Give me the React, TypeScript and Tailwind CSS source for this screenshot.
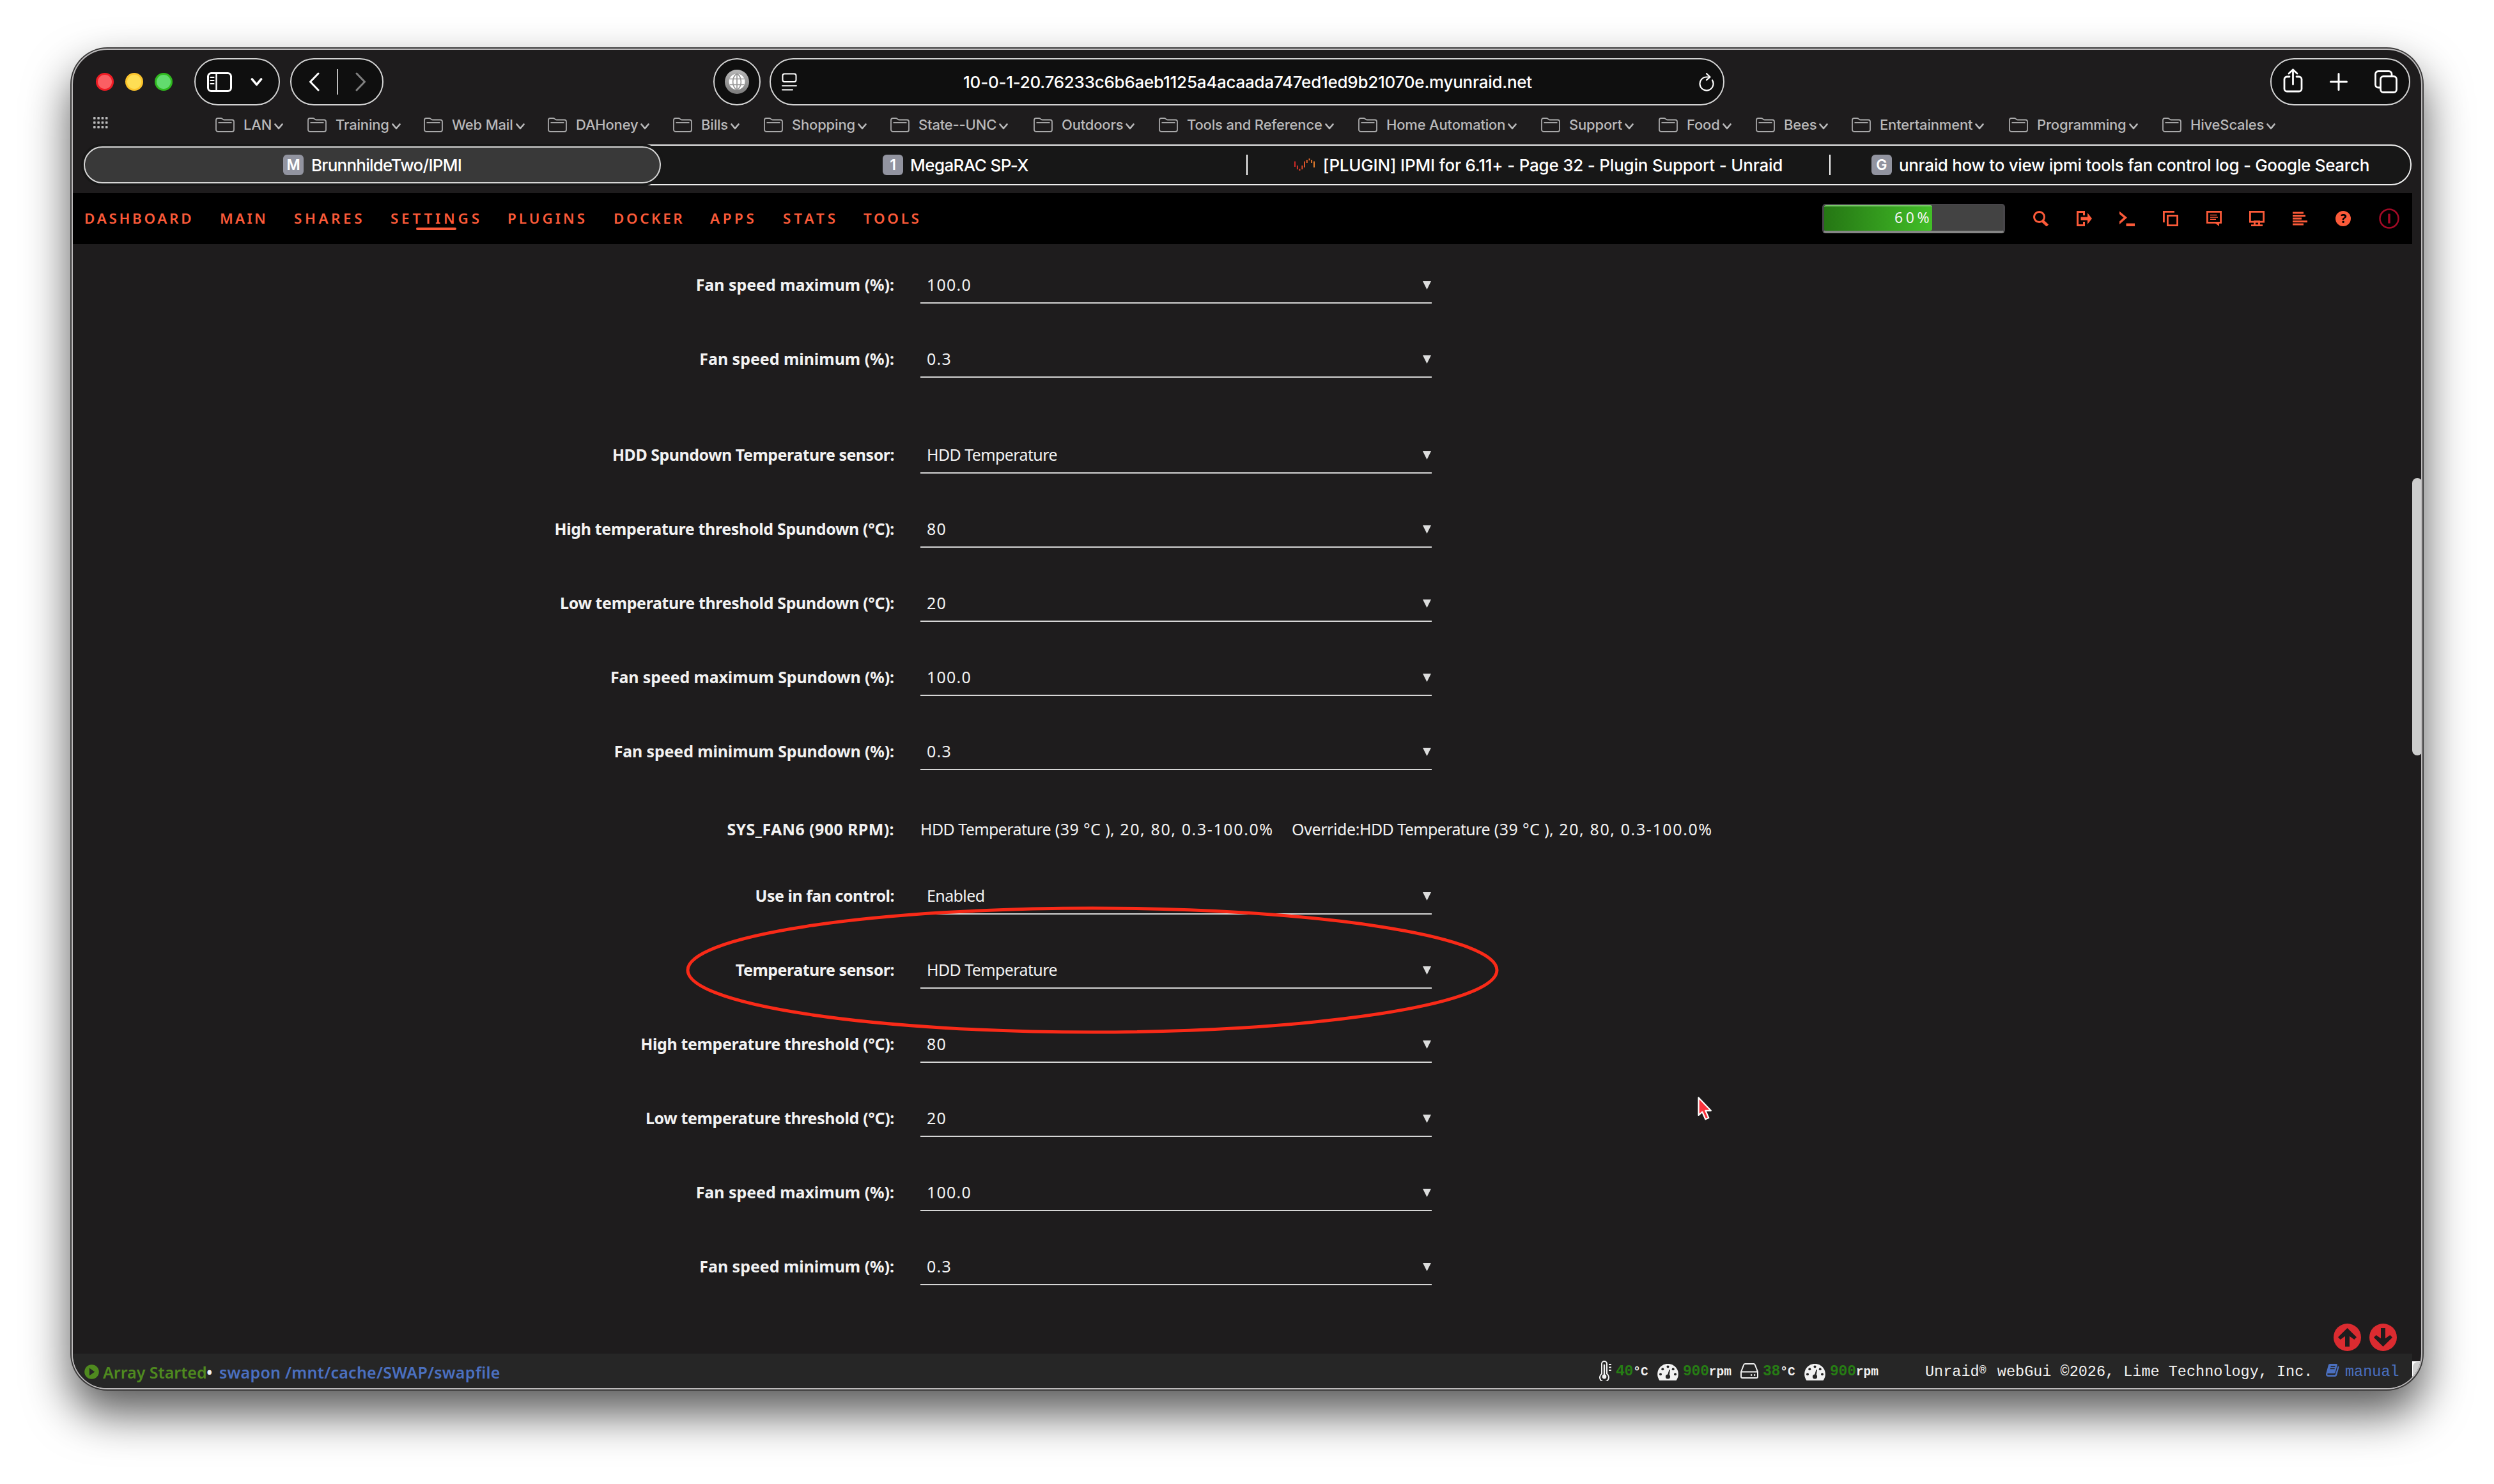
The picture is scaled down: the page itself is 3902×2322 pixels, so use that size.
import type { ReactNode } from 'react';

interface Bookmark {
  label: string;
  width: string;
}

interface FieldProps {
  label: string;
  value: string;
  spacing?: string;
  labelClass?: string;
}

const bookmarks: Bookmark[] = [
  { label: 'LAN', width: 'w-[144px]' },
  { label: 'Training', width: 'w-[182px]' },
  { label: 'Web Mail', width: 'w-[194px]' },
  { label: 'DAHoney', width: 'w-[196px]' },
  { label: 'Bills', width: 'w-[142px]' },
  { label: 'Shopping', width: 'w-[198px]' },
  { label: 'State--UNC', width: 'w-[224px]' },
  { label: 'Outdoors', width: 'w-[196px]' },
  { label: 'Tools and Reference', width: 'w-[312px]' },
  { label: 'Home Automation', width: 'w-[286px]' },
  { label: 'Support', width: 'w-[184px]' },
  { label: 'Food', width: 'w-[152px]' },
  { label: 'Bees', width: 'w-[150px]' },
  { label: 'Entertainment', width: 'w-[246px]' },
  { label: 'Programming', width: 'w-[240px]' },
  { label: 'HiveScales', width: 'w-[180px]' },
];

const navItems = [
  { label: 'Dashboard', className: 'w-[212px] tracking-[3.7px]' },
  { label: 'Main', className: 'w-[116px] tracking-[3.3px]' },
  { label: 'Shares', className: 'w-[151px] tracking-[4.6px]' },
  { label: 'Settings', className: 'w-[183px] tracking-[4.8px]', active: true },
  { label: 'Plugins', className: 'w-[166px] tracking-[4px]' },
  { label: 'Docker', className: 'w-[151px] tracking-[3.6px]' },
  { label: 'Apps', className: 'w-[114px] tracking-[4.6px]' },
  { label: 'Stats', className: 'w-[126px] tracking-[5px]' },
  { label: 'Tools', className: 'w-[126px] tracking-[3.7px]' },
];

function FolderIcon() {
  return (
    <svg className="h-[23px] w-[30px] shrink-0" viewBox="0 0 30 23" fill="none" stroke="#a9a9aa" strokeWidth="1.8">
      <path d="M1 19V4a3 3 0 0 1 3-3h4.5c1 0 1.6.3 2.3.9l1 .8c.6.5 1.2.8 2.2.8H26a3 3 0 0 1 3 3V19a3 3 0 0 1-3 3H4a3 3 0 0 1-3-3Z" />
      <path d="M4.5 7.8h21" />
    </svg>
  );
}

function Chevron({ className }: { className: string }) {
  return (
    <svg className={className} viewBox="0 0 14 10" fill="none" stroke="currentColor" strokeWidth="2.7" strokeLinecap="round" strokeLinejoin="round">
      <path d="M1.5 1.5 7 8l5.5-6.5" />
    </svg>
  );
}

function Pill({ className, children }: { className: string; children: ReactNode }) {
  return (
    <div className={`flex h-[74px] shrink-0 items-center rounded-full border-2 border-[#d2d2d2] bg-[#0f0f0f] text-white ${className}`}>
      {children}
    </div>
  );
}

function Toolbar() {
  return (
    <div className="flex h-[87px] items-end pr-[17px] pl-[36px]">
      <div className="flex h-[74px] items-center gap-[18px]">
        <span className="size-7 rounded-full border-3 border-[#ef1c24] bg-[#fb5f63]" />
        <span className="size-7 rounded-full border-3 border-[#fcc42c] bg-[#fede54]" />
        <span className="size-7 rounded-full border-3 border-[#30b91f] bg-[#62db6e]" />
      </div>

      <Pill className="ml-[34px] w-[134px] pl-[18px]">
        <svg className="h-[31px] w-[39px]" viewBox="0 0 39 31" fill="none" stroke="currentColor">
          <rect x="1.5" y="1.5" width="36" height="28" rx="5" strokeWidth="3" />
          <path d="M14.5 2v27" strokeWidth="2.4" />
          <path d="M5.5 8h5M5.5 13h5M5.5 18h5" strokeWidth="2.2" strokeLinecap="round" />
        </svg>
        <Chevron className="ml-[29px] h-[13px] w-[19px]" />
      </Pill>

      <Pill className="ml-4 w-[146px] pl-[27px]">
        <svg className="h-[30px] w-[17px]" viewBox="0 0 17 30" fill="none" stroke="currentColor" strokeWidth="3" strokeLinecap="round" strokeLinejoin="round">
          <path d="M15 2 2.5 15 15 28" />
        </svg>
        <span className="ml-[27px] h-10 w-0.5 bg-[#bdbdbd]" />
        <svg className="ml-[27px] h-[30px] w-[17px]" viewBox="0 0 17 30" fill="none" stroke="#808080" strokeWidth="3" strokeLinecap="round" strokeLinejoin="round">
          <path d="m2 2 12.5 13L2 28" />
        </svg>
      </Pill>

      <Pill className="ml-[516px] w-[74px] justify-center">
        <span className="flex size-[38px] items-center justify-center rounded-full bg-linear-to-b from-[#b8b8b8] to-[#7c7c7c]">
          <svg className="size-[26px]" viewBox="0 0 26 26">
            <circle cx="13" cy="13" r="12.5" fill="#fff" />
            <path d="M13 0v26M1.5 8.5h23M1.5 17.5h23M13 0C4.5 6 4.5 20 13 26M13 0c8.5 6 8.5 20 0 26" fill="none" stroke="#979797" strokeWidth="1.7" />
          </svg>
        </span>
      </Pill>

      <Pill className="ml-[14px] w-[1494px] justify-between pr-[14px] pl-[17px]">
        <svg className="h-[28px] w-[24px]" viewBox="0 0 24 28" fill="none" stroke="currentColor" strokeWidth="2">
          <rect x="1.5" y="1.5" width="21" height="12.5" rx="3" />
          <path d="M1 20.2h22M1 26.5h16" strokeLinecap="round" />
        </svg>
        <span className="text-[26px] font-medium tracking-[-0.25px]">
          10-0-1-20.76233c6b6aeb1125a4acaada747ed1ed9b21070e.myunraid.net
        </span>
        <svg className="h-[29px] w-[25px]" viewBox="0 0 25 29" fill="none" stroke="currentColor" strokeWidth="2.2" strokeLinecap="round" strokeLinejoin="round">
          <path d="M22 11.5A10.5 10.5 0 1 1 12.5 6.5h5.5" />
          <path d="m13 1.2 5.5 5.3-5.5 4.7" />
        </svg>
      </Pill>

      <Pill className="ml-auto w-[219px] justify-between px-[18px]">
        <svg className="mb-1 h-[38px] w-[31px]" viewBox="0 0 31 38" fill="none" stroke="currentColor" strokeWidth="2.8" strokeLinecap="round" strokeLinejoin="round">
          <path d="M10 13H6a4 4 0 0 0-4 4v15a4 4 0 0 0 4 4h19a4 4 0 0 0 4-4V17a4 4 0 0 0-4-4h-4" />
          <path d="M15.5 25V2M9 8l6.5-6L22 8" />
        </svg>
        <svg className="size-[28px]" viewBox="0 0 28 28" fill="none" stroke="currentColor" strokeWidth="3" strokeLinecap="round">
          <path d="M14 1.5v25M1.5 14h25" />
        </svg>
        <svg className="size-[36px]" viewBox="0 0 36 36" fill="none" stroke="currentColor" strokeWidth="2.8">
          <rect x="9.5" y="9.5" width="25" height="25" rx="4.5" />
          <path d="M9.5 27H6a4.5 4.5 0 0 1-4.5-4.5V6A4.5 4.5 0 0 1 6 1.5h16.5A4.5 4.5 0 0 1 27 6v3.5" />
        </svg>
      </Pill>
    </div>
  );
}

function BookmarksBar() {
  return (
    <div className="flex h-[61px] items-center pl-8 text-[#b9b9ba]">
      <svg className="mb-2 h-[18px] w-[23px]" viewBox="0 0 23 18" fill="currentColor">
        {[0, 7, 14].map((y) =>
          [0, 6.3, 12.6, 18.9].map((x) => <rect key={`${x}-${y}`} x={x} y={y} width="3.6" height="3.8" rx="0.8" />)
        )}
      </svg>
      <div className="ml-[168px] flex">
        {bookmarks.map(({ label, width }) => (
          <div key={label} className={`flex shrink-0 items-center ${width}`}>
            <FolderIcon />
            <span className="ml-[14px] text-[22px] font-medium tracking-[-0.18px] whitespace-nowrap">{label}</span>
            <Chevron className="mt-1 ml-[4px] h-[10px] w-[14px]" />
          </div>
        ))}
      </div>
    </div>
  );
}

function Favicon({ letter }: { letter: string }) {
  return (
    <span className="flex size-8 shrink-0 items-center justify-center rounded-md bg-[#9294a0] text-[23px] leading-none font-semibold text-white">
      {letter}
    </span>
  );
}

function UnraidMark() {
  return (
    <svg className="h-5 w-8 shrink-0" viewBox="0 0 32 20" fill="none" strokeWidth="1.8">
      <defs>
        <linearGradient id="unraid-mark" gradientUnits="userSpaceOnUse" x1="0" y1="0" x2="32" y2="0">
          <stop offset="0" stopColor="#e22828" />
          <stop offset="1" stopColor="#ff8c2f" />
        </linearGradient>
      </defs>
      <path
        d="M1 4.5v8.5M4.8 11v6M8.5 16v3M12.3 11v6M16 4.5v9.5M19.8 2v5M23.5 0v3M27.2 2v5M31 4.5v9.5"
        stroke="url(#unraid-mark)"
      />
    </svg>
  );
}

function TabBar() {
  return (
    <div className="mr-[15px] ml-4 flex h-16 items-center rounded-full border-2 border-[#eeeeee] bg-[#171717] text-[26px] font-medium text-white">
      <div className="-ml-px flex h-[58px] w-[903px] items-center justify-center gap-3 rounded-full border-2 border-[#d6d6d6] bg-[#393939] shadow-[0_0_0_4px_#171717]">
        <Favicon letter="M" />
        <span className="tracking-[-0.75px]">BrunnhildeTwo/IPMI</span>
      </div>
      <div className="ml-[6px] flex w-[910px] items-center justify-center gap-[11px]">
        <Favicon letter="1" />
        <span className="tracking-[-0.6px]">MegaRAC SP-X</span>
      </div>
      <span className="h-8 w-0.5 bg-white" />
      <div className="flex w-[910px] items-center justify-center gap-[13px]">
        <UnraidMark />
        <span className="tracking-[-0.22px]">[PLUGIN] IPMI for 6.11+ - Page 32 - Plugin Support - Unraid</span>
      </div>
      <span className="h-8 w-0.5 bg-white" />
      <div className="flex flex-1 items-center justify-center gap-[11px]">
        <Favicon letter="G" />
        <span className="tracking-[-0.32px]">unraid how to view ipmi tools fan control log - Google Search</span>
      </div>
    </div>
  );
}

function NavIcons() {
  return (
    <div className="ml-11 flex items-center gap-[43.6px] text-[#fb5a39]">
      <svg className="size-6" viewBox="0 0 24 24" fill="none" stroke="currentColor">
        <circle cx="9.5" cy="9.5" r="8" strokeWidth="3" />
        <path d="m14.5 15.5 8 7.5" strokeWidth="4.5" />
      </svg>
      <svg className="size-6" viewBox="0 0 24 24" fill="currentColor">
        <path d="M0 0h13v7h-3V3H3v18h7v-4h3v7H0z" />
        <path d="M6.5 9.5H17V3l7 9-7 9v-6.5H6.5z" />
      </svg>
      <svg className="size-6" viewBox="0 0 24 24" fill="currentColor">
        <path d="M0 .5 12 10.500 0 21v-4.500l6.500-6L0 5zM10.500 19.500H24V24H10.500z" />
      </svg>
      <svg className="size-6" viewBox="0 0 24 24" fill="none" stroke="currentColor" strokeWidth="2.8">
        <path d="M1.4 18V1.4H18" />
        <path d="M7.4 7.4h15.2v15.2H7.4z" />
      </svg>
      <svg className="size-6" viewBox="0 0 24 24" fill="none" stroke="currentColor">
        <path d="M1.4 1.4h21.2v17H1.4z" strokeWidth="2.8" />
        <path d="M6 6.5h10.5M6 10h12M6 13.3h9" strokeWidth="1.6" />
        <path d="M13.5 19h6.5v5z" fill="currentColor" stroke="none" />
      </svg>
      <svg className="size-6" viewBox="0 0 24 24" fill="none" stroke="currentColor">
        <path d="M1.4 1.4h21.2v15.8H1.4z" strokeWidth="2.8" />
        <path d="M7 16.5h10M3 22.7h18M8.5 17v7M15.5 17v7" strokeWidth="2.8" />
      </svg>
      <svg className="size-6" viewBox="0 0 24 24" fill="currentColor">
        <path d="M0 1.5h17v3H0zM0 6h20v3H0zM0 10.500h14v3H0zM0 15h23v3H0zM0 19.500h17v3H0z" />
      </svg>
      <span className="flex size-6 items-center justify-center rounded-full bg-[#fb5a39] text-[20px] leading-none font-bold text-black">?</span>
      <svg className="size-8" viewBox="0 0 32 32" fill="none" stroke="#a30a26">
        <circle cx="16" cy="16" r="14.5" strokeWidth="2.5" />
        <path d="M16 8.5v15" strokeWidth="3.5" />
      </svg>
    </div>
  );
}

function Header() {
  return (
    <header className="flex h-20 shrink-0 items-center bg-black pr-5 pl-[18px]">
      <nav className="flex text-[22.4px] leading-[30px] font-semibold text-[#fb5a39] uppercase">
        {navItems.map(({ label, className, active }) => (
          <div key={label} className={`relative ${className}`}>
            {label}
            {active && <span className="absolute top-[29px] left-10 h-1 w-[63px] rounded-sm bg-[#fb5a39]" />}
          </div>
        ))}
      </nav>
      <div className="ml-auto flex h-[46px] w-[286px] rounded-[5px] border-3 border-t-2 border-b-4 border-[#48464a] border-b-[#858585] bg-[#434343]">
        <div className="flex w-[169px] items-center justify-end rounded-[3px] border-t-2 border-[#79c86a] bg-linear-to-r from-[#257614] to-[#42bf27] pb-1 text-[23px] tracking-[4.6px] text-[#f4f4f4]">
          60%
        </div>
      </div>
      <NavIcons />
    </header>
  );
}

function Field({ label, value, spacing = 'mt-14', labelClass = 'tracking-[-0.5px]' }: FieldProps) {
  const isText = /[a-z]/i.test(value);
  return (
    <div className={`flex h-[60px] ${spacing}`}>
      <label className={`flex w-[1285px] items-end justify-end pb-[13px] font-bold ${labelClass}`}>{label}</label>
      <div className="ml-[41px] flex w-[800px] items-end justify-between border-b-2 border-[#d6d6d6] pr-px pb-[11px] pl-[10px]">
        <span className={isText ? 'tracking-[-0.6px]' : 'tracking-[1.2px]'}>{value}</span>
        <svg className="mb-[9px] h-[13px] w-[13px]" viewBox="0 0 13 13" fill="#dcdcdc">
          <path d="M0 0h13L6.5 13z" />
        </svg>
      </div>
    </div>
  );
}

function Reading() {
  return (
    <>
      <span className="tracking-[-0.6px]">HDD Temperature</span>
      <span className="tracking-[0.4px]"> (39 °C ),</span>
      <span className="tracking-[1.6px]"> 20, 80, 0.3-100.0%</span>
    </>
  );
}

function Settings() {
  return (
    <main className="flex-1 overflow-hidden bg-[#1e1c1d] text-[25px] leading-[34px] text-[#f2f2f2]">
      <Field label="Fan speed maximum (%):" value="100.0" spacing="mt-[33px]" labelClass="tracking-[-0.04px]" />
      <Field label="Fan speed minimum (%):" value="0.3" labelClass="tracking-[-0.04px]" />
      <Field label="HDD Spundown Temperature sensor:" value="HDD Temperature" spacing="mt-[90px]" />
      <Field label="High temperature threshold Spundown (°C):" value="80" labelClass="tracking-[-0.34px]" />
      <Field label="Low temperature threshold Spundown (°C):" value="20" labelClass="tracking-[-0.36px]" />
      <Field label="Fan speed maximum Spundown (%):" value="100.0" labelClass="tracking-[-0.14px]" />
      <Field label="Fan speed minimum Spundown (%):" value="0.3" labelClass="tracking-[-0.14px]" />

      <div className="mt-[62px] flex h-[60px] items-end pb-[13px]">
        <span className="w-[1285px] text-right font-bold tracking-[0.4px]">SYS_FAN6 (900 RPM):</span>
        <span className="ml-[41px] w-[581px] whitespace-nowrap"><Reading /></span>
        <span className="tracking-[-0.4px] whitespace-nowrap">Override:<Reading /></span>
      </div>

      <Field label="Use in fan control:" value="Enabled" spacing="mt-11" />
      <Field label="Temperature sensor:" value="HDD Temperature" />
      <Field label="High temperature threshold (°C):" value="80" labelClass="tracking-[-0.36px]" />
      <Field label="Low temperature threshold (°C):" value="20" labelClass="tracking-[-0.36px]" />
      <Field label="Fan speed maximum (%):" value="100.0" labelClass="tracking-[-0.04px]" />
      <Field label="Fan speed minimum (%):" value="0.3" labelClass="tracking-[-0.04px]" />
    </main>
  );
}

function ThermometerIcon() {
  return (
    <svg className="h-8 w-[19px]" viewBox="0 0 19 32" fill="none" stroke="#f2f2f2">
      <path d="M4 20.5V5a4 4 0 0 1 8 0v15.5a7 7 0 1 1-8 0Z" strokeWidth="2" />
      <path d="M8 6v18" strokeWidth="2.4" />
      <circle cx="8" cy="25" r="3.4" fill="#f2f2f2" stroke="none" />
      <path d="M15 6h4M15 10.5h4M15 15h4" strokeWidth="2" />
    </svg>
  );
}

function GaugeIcon() {
  return (
    <svg className="mt-1 h-[26px] w-[33px]" viewBox="0 0 33 26">
      <path d="M3.5 26A16.3 16.3 0 1 1 29.5 26Z" fill="#f2f2f2" />
      <g fill="#262626">
        <circle cx="16.5" cy="4.6" r="2" />
        <circle cx="8.3" cy="8.3" r="2" />
        <circle cx="24.7" cy="8.3" r="2" />
        <circle cx="5" cy="16.2" r="2" />
        <circle cx="28" cy="16.2" r="2" />
        <circle cx="16.5" cy="20" r="3.6" />
        <path d="m15.5 19 3-10 1.5.3-1.5 10z" />
      </g>
    </svg>
  );
}

function DiskIcon() {
  return (
    <svg className="h-6 w-7" viewBox="0 0 28 24" fill="none" stroke="#f2f2f2" strokeWidth="2">
      <path d="M1 13.5 5 3a2.5 2.5 0 0 1 2.3-2h13.4A2.5 2.5 0 0 1 23 3l4 10.5V21a2 2 0 0 1-2 2H3a2 2 0 0 1-2-2ZM1 13.5h26" />
      <path d="M16 18.5h2.2M21 18.5h2.2" strokeWidth="2.6" />
    </svg>
  );
}

function Metric({ value, unit }: { value: string; unit: string }) {
  return (
    <span className="flex items-baseline pt-0.5 font-['Liberation_Mono',monospace] font-bold">
      <span className="text-[23px] tracking-[-0.2px] text-[#267d14]">{value}</span>
      <span className="text-[19.5px] text-[#f2f2f2]">{unit}</span>
    </span>
  );
}

function StatusBar() {
  return (
    <footer className="flex h-[54px] shrink-0 items-center bg-[#262626] pl-[18px] text-[#f2f2f2]">
      <svg className="mt-0.5 size-[23px]" viewBox="0 0 23 23">
        <circle cx="11.5" cy="11.5" r="11.3" fill="#4f8a1f" />
        <path d="M7.8 5.6v11.8l8.4-5.900z" fill="#262626" />
      </svg>
      <div className="ml-[6px] flex w-[2341px] pt-[3px] text-[25px] leading-[34px] font-semibold">
        <span className="w-[162px] tracking-[0px] whitespace-nowrap text-[#4f8a1f]">Array Started</span>
        <span className="w-5">•</span>
        <span className="tracking-[0.26px] text-[#4b70c0]">swapon /mnt/cache/SWAP/swapfile</span>
      </div>

      <ThermometerIcon />
      <div className="ml-[7px] flex w-[65px]">
        <Metric value="40" unit="°C" />
      </div>
      <GaugeIcon />
      <div className="ml-[7px] flex w-[90px]">
        <Metric value="900" unit="rpm" />
      </div>
      <DiskIcon />
      <div className="ml-[7px] flex w-[65px]">
        <Metric value="38" unit="°C" />
      </div>
      <GaugeIcon />
      <div className="ml-[7px] flex w-[149px]">
        <Metric value="900" unit="rpm" />
      </div>

      <div className="flex items-center pt-[3px] font-['Liberation_Mono',monospace] text-[23.5px] whitespace-nowrap">
        <span className="w-[627px]">
          Unraid<span className="inline-block w-[14.1px] -translate-y-[4px] text-[18px]">®</span> webGui ©2026, Lime Technology, Inc.
        </span>
        <svg className="mb-[5px] h-[20px] w-[21px]" viewBox="0 0 21 20" fill="#4b70c0">
          <path d="M6.5 0h9.8c1.2 0 1.8.8 1.5 2l-3 11c-.3 1.2-1 2-2.3 2H3.2c-1.3 0-1.3 2.3.3 2.3h10c.8 0 1.2-.4 1.4-1.1L18.8 3.5c1.4.3 1.8 1 1.5 2.2l-3 11.5c-.5 1.8-1.5 2.8-3.2 2.8H4C1 20-.5 17.8.2 15.3L3.8 2.2C4.2.8 5 0 6.5 0Z" />
          <path d="M7.5 4.2h7M6.7 7.4h7" stroke="#262626" strokeWidth="1.5" />
        </svg>
        <span className="ml-[9px] text-[#4b70c0]">manual</span>
      </div>
    </footer>
  );
}

function ScrollButton({ down = false }: { down?: boolean }) {
  return (
    <svg className={`size-[43px] ${down ? 'rotate-180' : ''}`} viewBox="0 0 43 43">
      <circle cx="21.5" cy="21.5" r="21.5" fill="#db2b30" />
      <path d="M21.5 7 36 21.3l-3.6 3.7-7.4-5.2V36h-7V19.8L10.6 25 7 21.3Z" fill="#1e1c1d" />
    </svg>
  );
}

export default function App() {
  return (
    <div className="relative h-[2322px] w-[3902px] overflow-hidden bg-white pt-[74px] pl-[110px] font-['Inter',sans-serif]">
      <div className="h-[2102px] w-[3682px] rounded-[58px] bg-[#3c3b3b] p-0.5 shadow-[0_36px_70px_rgba(0,0,0,0.65)]">
        <div className="flex h-full flex-col overflow-hidden rounded-[56px] border-2 border-[#bcbabb] bg-[#1e1c1d]">
          <div className="h-[224px] shrink-0">
            <Toolbar />
            <BookmarksBar />
            <TabBar />
          </div>

          <div className="flex min-h-0 flex-1 font-['Noto_Sans',sans-serif]">
            <div className="flex w-[3660px] flex-col">
              <Header />
              <Settings />
              <StatusBar />
            </div>
            <div className="flex w-[14px] flex-col justify-between pt-[446px]">
              <span className="h-[434px] w-4 rounded-full bg-[#cdcdcd]" />
              <span className="flex h-[42px] bg-white pt-px pl-px">
                <span className="flex-1 rounded-tl-[8px] bg-[#cfcfcf]" />
              </span>
            </div>
          </div>
        </div>
      </div>

      {/* floating page-up / page-down buttons */}
      <div className="absolute top-[2071px] left-[3651px] flex gap-[13px]">
        <ScrollButton />
        <ScrollButton down />
      </div>

      {/* highlight around the temperature sensor field */}
      <svg className="absolute top-[1418px] left-[1073px] h-[200px] w-[1272px]" viewBox="0 0 1272 200" fill="none">
        <ellipse cx="636" cy="100" rx="633" ry="97" stroke="#f92a18" strokeWidth="5" />
      </svg>

      <svg className="absolute top-[1716px] left-[2656px] h-[37px] w-[23px]" viewBox="0 0 23 37">
        <path d="M1.5 1.5v27.5l5.8-5.2 5 11.5 5-2.2-5-11.3h8.5Z" fill="#fb323c" stroke="#fff" strokeWidth="2.2" strokeLinejoin="round" />
      </svg>
    </div>
  );
}
